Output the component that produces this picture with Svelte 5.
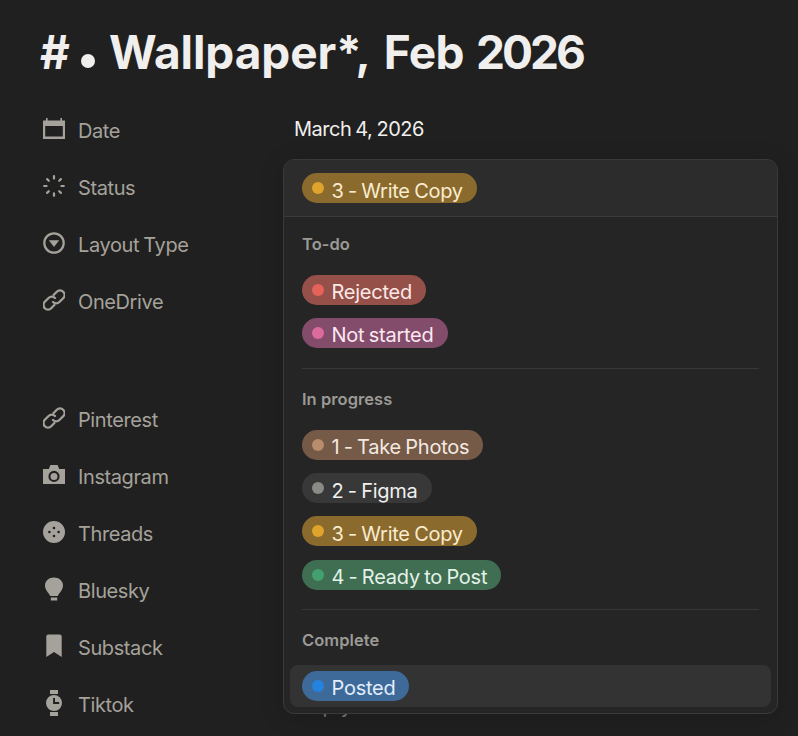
<script>
  const props = [
    { name: 'Date', icon: 'calendar', value: 'March 4, 2026' },
    { name: 'Status', icon: 'spinner' },
    { name: 'Layout Type', icon: 'select' },
    { name: 'OneDrive', icon: 'link', tall: true },
    { name: 'Pinterest', icon: 'link' },
    { name: 'Instagram', icon: 'camera' },
    { name: 'Threads', icon: 'button' },
    { name: 'Bluesky', icon: 'bulb' },
    { name: 'Substack', icon: 'bookmark' },
    { name: 'Tiktok', icon: 'watch', empty: 'Empty' }
  ];

  const colors = {
    red: { bg: '#96504a', dot: '#e5635a', fg: '#fbe9e6' },
    pink: { bg: '#844c6b', dot: '#dd6a9f', fg: '#fbe8f1' },
    brown: { bg: '#765a48', dot: '#b98d6c', fg: '#f3e9e1' },
    gray: { bg: '#383838', dot: '#8c8a87', fg: '#f0f0ef' },
    yellow: { bg: '#8b6a2d', dot: '#dea42c', fg: '#f9ecd0' },
    green: { bg: '#3f6e52', dot: '#44a06f', fg: '#e3f2e9' },
    blue: { bg: '#3e6a9a', dot: '#2583e0', fg: '#e1edfa' }
  };

  const groups = [
    { title: 'To-do', options: [['Rejected', 'red'], ['Not started', 'pink']] },
    { title: 'In progress', options: [['1 - Take Photos', 'brown'], ['2 - Figma', 'gray'], ['3 - Write Copy', 'yellow'], ['4 - Ready to Post', 'green']] },
    { title: 'Complete', options: [['Posted', 'blue']] }
  ];
</script>

{#snippet pill(label, key)}
  <span class="pill" style="background:{colors[key].bg};color:{colors[key].fg}">
    <span class="dot" style="background:{colors[key].dot}"></span><span class="pill-text">{label}</span>
  </span>
{/snippet}

{#snippet icon(name)}
  <svg class="icon" viewBox="0 0 22 26" width="22" height="26">
    {#if name === 'calendar'}
      <path fill-rule="evenodd" d="M0 4.500h3V2h1.600v2.500h12.800V2H19v2.500h3V23H0zM2.200 10v10.600h17.600V10z"/>
    {:else if name === 'spinner'}
      <g fill="none" stroke="currentColor" stroke-width="2.200" stroke-linecap="round">
        <path d="M11 3.200v2.400M11 20.400v2.400M1.200 13h2.400M18.400 13h2.400M4.100 6.100l1.700 1.700M16.200 18.200l1.700 1.700M4.100 19.900l1.700-1.700M16.200 7.800l1.700-1.700"/>
      </g>
    {:else if name === 'select'}
      <circle cx="11" cy="13" r="9.700" fill="none" stroke="currentColor" stroke-width="2.200"/>
      <path d="M5.800 10.200h10.400L11 17z"/>
    {:else if name === 'link'}
      <g fill="none" stroke="currentColor" stroke-width="2.300" stroke-linecap="round">
        <path d="M10.600 8l3.200-3.200a4.500 4.500 0 0 1 6.400 6.400l-3.800 3.800a4.500 4.500 0 0 1-6.400 0"/>
        <path d="M11.400 18l-3.200 3.200a4.500 4.500 0 0 1-6.400-6.400l3.800-3.800a4.500 4.500 0 0 1 6.400 0"/>
      </g>
    {:else if name === 'camera'}
      <path fill-rule="evenodd" d="M0 7h5.800L7.400 3h7.200l1.600 4H22v15H0zM11 8.800a5.600 5.600 0 1 0 0 11.200 5.600 5.600 0 0 0 0-11.200zM11 10.900a3.500 3.500 0 1 1 0 7 3.500 3.500 0 0 1 0-7z"/>
    {:else if name === 'button'}
      <path fill-rule="evenodd" d="M11 2a11 11 0 1 1 0 22 11 11 0 0 1 0-22zM11 7.700a1.300 1.300 0 1 0 0 2.600 1.300 1.300 0 0 0 0-2.600zM6.400 11.700a1.300 1.300 0 1 0 0 2.600 1.300 1.300 0 0 0 0-2.600zM15.600 11.700a1.300 1.300 0 1 0 0 2.600 1.300 1.300 0 0 0 0-2.600zM11 15.700a1.300 1.300 0 1 0 0 2.600 1.300 1.300 0 0 0 0-2.600z"/>
    {:else if name === 'bulb'}
      <path d="M11 1.500c5 0 9 3.300 9 7.900 0 4.600-3.700 7-5.200 10.600H7.200C5.700 16.400 2 14 2 9.400 2 4.800 6 1.500 11 1.500zM7.800 21.400h6.400v3H7.800z"/>
    {:else if name === 'bookmark'}
      <path d="M5.300 1.500h11.400a2 2 0 0 1 2 2v20.500L11 19l-7.700 5V3.500a2 2 0 0 1 2-2z"/>
    {:else if name === 'watch'}
      <path fill-rule="evenodd" d="M7 0h8v4H7zM7 22h8v4H7zM11 5a8 8 0 1 1 0 16 8 8 0 0 1 0-16zM10.100 8v6h6.100v-1.900h-4.200V8z"/>
    {/if}
  </svg>
{/snippet}

<main>
  <h1><span class="hash">#</span><span class="bullet"></span><span class="word">Wallpaper*,</span><span class="feb">Feb</span><span class="year">2026</span></h1>

  <div class="props">
    {#each props as p}
      <div class="row" class:tall={p.tall}>
        <div class="name">
          {@render icon(p.icon)}
          <span>{p.name}</span>
        </div>
        {#if p.value}<div class="value">{p.value}</div>{/if}
        {#if p.empty}<div class="value muted">{p.empty}</div>{/if}
      </div>
    {/each}
  </div>

  <div class="popup">
    <div class="current">
      {@render pill('3 - Write Copy', 'yellow')}
    </div>
    <div class="groups">
      {#each groups as g}
        <section>
          <h2>{g.title}</h2>
          {#each g.options as [label, key]}
            <div class="option" class:hover={label === 'Posted'}>
              {@render pill(label, key)}
            </div>
          {/each}
        </section>
      {/each}
    </div>
  </div>
</main>

<style>
  :global(body) {
    margin: 0;
    background: #202020;
    font-family: Inter, "Noto Sans", sans-serif;
    overflow: hidden;
  }

  main {
    position: relative;
    height: 736px;
    padding: 0 0 0 40px;
    box-sizing: border-box;
    overflow: hidden;
  }

  h1 {
    display: flex;
    align-items: baseline;
    margin: 0;
    padding-top: 23px;
    height: 79px;
    font-size: 46px;
    line-height: 58px;
    font-weight: 700;
    color: #f0efed;
    letter-spacing: -0.5px;
    white-space: pre;
  }

  .hash {
    width: 41px;
  }

  .bullet {
    width: 14px;
    height: 14px;
    border-radius: 50%;
    background: #f0efed;
    margin: 0 14px 0 0;
    align-self: center;
    transform: translateY(-2px);
  }

  .word {
    letter-spacing: -0.1px;
  }

  .feb {
    margin-left: 13px;
    letter-spacing: -0.6px;
  }

  .year {
    margin-left: 12px;
    letter-spacing: -3px;
  }

  .props {
    display: flex;
    flex-direction: column;
    margin-top: 0.5px;
  }

  .row {
    display: flex;
    align-items: flex-start;
    height: 57px;
  }

  .row.tall {
    height: 118px;
  }

  .name {
    display: flex;
    align-items: center;
    gap: 13px;
    width: 254px;
    height: 57px;
    color: #a5a29b;
    font-size: 20px;
    letter-spacing: -0.4px;
    word-spacing: -1px;
    padding-left: 3px;
    box-sizing: border-box;
  }

  .icon {
    fill: currentColor;
    flex: none;
    margin-top: -5px;
  }

  .value {
    height: 57px;
    line-height: 52px;
    font-size: 20px;
    letter-spacing: -0.5px;
    word-spacing: -1px;
    color: #f0efed;
  }

  .value.muted {
    color: #7d7c77;
    line-height: 58px;
  }

  .popup {
    position: absolute;
    left: 283px;
    top: 159px;
    width: 495px;
    height: 555px;
    box-sizing: border-box;
    background: #252525;
    border: 1.5px solid #3a3a3a;
    border-radius: 11px;
    box-shadow: 0 4px 24px rgba(0, 0, 0, 0.15);
    overflow: hidden;
  }

  .current {
    display: flex;
    align-items: center;
    height: 57px;
    padding-left: 18px;
    background: #2c2c2c;
    border-bottom: 1.5px solid #3a3a3a;
    box-sizing: border-box;
  }

  .groups {
    padding: 0 6px;
  }

  section {
    padding-bottom: 14px;
    position: relative;
  }

  section + section::before {
    content: '';
    position: absolute;
    left: 12px;
    right: 12px;
    top: -1px;
    height: 1px;
    background: #383838;
  }

  h2 {
    margin: 0;
    padding: 19px 0 0 12px;
    height: 54.5px;
    box-sizing: border-box;
    font-size: 16.5px;
    line-height: 22px;
    font-weight: 600;
    letter-spacing: 0.05px;
    color: #9b9a96;
  }

  section:first-child h2 {
    padding-top: 15.500px;
    height: 51px;
  }

  .option {
    display: flex;
    align-items: center;
    height: 43.3px;
    padding-left: 12px;
    border-radius: 8px;
  }

  .option.hover {
    background: #333333;
    height: 42px;
  }

  .pill {
    display: inline-flex;
    align-items: center;
    height: 30px;
    padding: 0 14px 0 10px;
    border-radius: 15px;
    font-size: 20px;
    line-height: 24px;
    letter-spacing: -0.25px;
    word-spacing: -1px;
    white-space: nowrap;
  }

  .pill-text {
    padding-top: 5px;
  }

  .dot {
    width: 12px;
    height: 12px;
    border-radius: 50%;
    margin-right: 7.5px;
  }
</style>
